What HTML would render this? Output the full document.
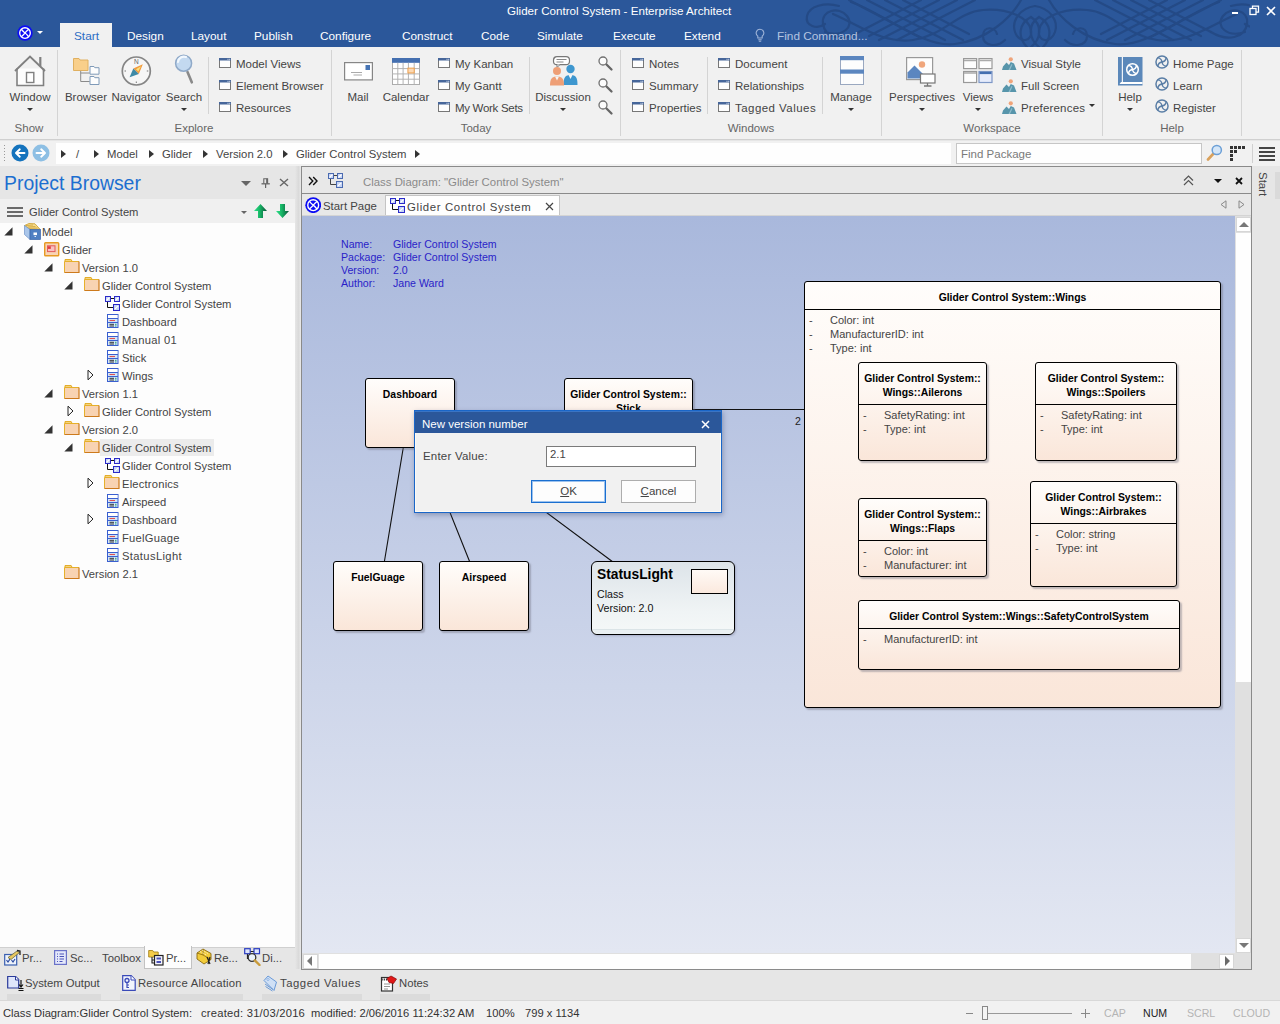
<!DOCTYPE html>
<html>
<head>
<meta charset="utf-8">
<title>Glider Control System - Enterprise Architect</title>
<style>
*{box-sizing:border-box;margin:0;padding:0}
html,body{width:1280px;height:1024px;overflow:hidden;background:#e6e6e6;font-family:"Liberation Sans",sans-serif;font-size:12px;color:#444}
.a{position:absolute}
.t{position:absolute;white-space:nowrap;line-height:14px;height:14px}
#titlebar{left:0;top:0;width:1280px;height:47px;background:#2b579a}
#ribbon{left:0;top:47px;width:1280px;height:93px;background:#f1f1f1;border-bottom:1px solid #d0d0d0}
#crumbbar{left:0;top:141px;width:1280px;height:25px;background:#f1f1f1}
.rtab{position:absolute;top:29px;color:#fff;font-size:11.8px;line-height:15px;white-space:nowrap}
.rl{position:absolute;font-size:11.5px;line-height:14px;white-space:nowrap;color:#444}
.rg{position:absolute;top:121px;font-size:11.5px;line-height:14px;white-space:nowrap;color:#666;transform:translateX(-50%)}
.rc{position:absolute;font-size:11.5px;line-height:14px;white-space:nowrap;color:#444;transform:translateX(-50%)}
.vsep{position:absolute;width:1px;background:#d4d4d4}
.dd{position:absolute;width:0;height:0;border-left:3px solid transparent;border-right:3px solid transparent;border-top:3px solid #333}
.tr{position:absolute;left:0;height:18px;white-space:nowrap;font-size:12.5px;line-height:20px;color:#444}
.box{position:absolute;border:1px solid #000;border-radius:3px;background:linear-gradient(#fffdfb,#fae6d9);box-shadow:2px 2px 1.5px rgba(110,110,125,.42)}
.bt{position:absolute;left:0;right:0;text-align:center;font-weight:bold;font-size:10.4px;line-height:14px;color:#000;white-space:nowrap}
.at{position:absolute;font-size:11px;line-height:14px;color:#444;white-space:nowrap}
.sep{position:absolute;left:0;right:0;height:1px;background:#000}
</style>
</head>
<body>
<!-- TITLE BAR -->
<div id="titlebar" class="a">
<svg class="a" style="left:800px;top:0" width="450" height="47" viewBox="-235 0 450 47" fill="none" stroke="#244a86" stroke-width="2.2" stroke-linecap="round">
<g><path d="M4 47c-10-8-12-22 0-30M8 47c10-10 8-24-4-30"/>
<path d="M0 6c14 2 24 14 20 26s-18 10-16-2 22-22 48-20 40 26 70 30 52-14 80-26"/>
<path d="M14 0c10 18 34 40 66 44s70-30 104-42"/>
<path d="M60 0l78 40M78 0l78 40M96 0l70 36M114 0l62 32"/>
<path d="M150 0l-78 40M168 0l-78 40M186 0l-72 38M132 0l-66 34"/>
<path d="M176 32c16 10 34 6 36-8s-16-18-24-8 4 22 22 16"/>
<path d="M30 40c8 8 22 6 22-4s-12-10-14-2"/>
<path d="M196 6c14-4 30 0 32 10s-10 14-18 8"/></g>
<g transform="scale(-1,1)"><path d="M4 47c-10-8-12-22 0-30M8 47c10-10 8-24-4-30"/>
<path d="M0 6c14 2 24 14 20 26s-18 10-16-2 22-22 48-20 40 26 70 30 52-14 80-26"/>
<path d="M14 0c10 18 34 40 66 44s70-30 104-42"/>
<path d="M60 0l78 40M78 0l78 40M96 0l70 36M114 0l62 32"/>
<path d="M150 0l-78 40M168 0l-78 40M186 0l-72 38M132 0l-66 34"/>
<path d="M176 32c16 10 34 6 36-8s-16-18-24-8 4 22 22 16"/>
<path d="M30 40c8 8 22 6 22-4s-12-10-14-2"/>
<path d="M196 6c14-4 30 0 32 10s-10 14-18 8"/></g>
</svg>
<div class="t" style="left:507px;top:4px;font-size:11.6px;color:#fff">Glider Control System - Enterprise Architect</div>
<!-- app icon -->
<svg class="a" style="left:17px;top:25px" width="16" height="16" viewBox="-8 -8 16 16"><circle r="7.7" fill="#0c0cf4"/><circle r="5.3" fill="none" stroke="#fff" stroke-width="1.350"/><path d="M-3.700 -3.700Q-1 -.5 0 0T3.700 3.700M3.700 -3.700Q.5 -1 0 0T-3.700 3.700" fill="none" stroke="#fff" stroke-width="1.350"/></svg>
<div class="dd" style="left:37px;top:31px;border-top-color:#fff"></div>
<div class="a" style="left:60px;top:23px;width:52px;height:24px;background:#f1f1f1"></div>
<div class="rtab" style="left:74px;color:#2b6cc4">Start</div>
<div class="rtab" style="left:127px">Design</div>
<div class="rtab" style="left:191px">Layout</div>
<div class="rtab" style="left:254px">Publish</div>
<div class="rtab" style="left:320px">Configure</div>
<div class="rtab" style="left:402px">Construct</div>
<div class="rtab" style="left:481px">Code</div>
<div class="rtab" style="left:537px">Simulate</div>
<div class="rtab" style="left:613px">Execute</div>
<div class="rtab" style="left:684px">Extend</div>
<svg class="a" style="left:754px;top:28px" width="12" height="15" viewBox="0 0 12 15" fill="none" stroke="#9fb4d8" stroke-width="1.1"><path d="M6 1.2a3.8 3.8 0 0 0-2.2 6.9V10h4.4V8.100A3.800 3.800 0 0 0 6 1.200zM4.300 11.800h3.400M4.800 13.300h2.400"/></svg>
<div class="rtab" style="left:777px;color:#b4c4e0">Find Command...</div>
<!-- window controls -->
<div class="a" style="left:1232px;top:12px;width:6px;height:2px;background:#fff"></div>
<svg class="a" style="left:1249px;top:5px" width="11" height="11" viewBox="0 0 11 11" fill="none" stroke="#fff" stroke-width="1.3"><rect x="1" y="3.500" width="6" height="6"/><path d="M3.500 3.500V1.200h6v6H7"/></svg>
<svg class="a" style="left:1266px;top:6px" width="10" height="10" viewBox="0 0 10 10" stroke="#fff" stroke-width="1.6"><path d="M1 1l8 8M9 1l-8 8"/></svg>
</div>
<!-- RIBBON -->
<div id="ribbon" class="a"></div>
<div id="ribbonc" class="a" style="left:0;top:0;width:1280px;height:140px">
<div class="vsep" style="left:57px;top:50px;height:86px"></div>
<div class="vsep" style="left:331px;top:50px;height:86px"></div>
<div class="vsep" style="left:620px;top:50px;height:86px"></div>
<div class="vsep" style="left:881px;top:50px;height:86px"></div>
<div class="vsep" style="left:1102px;top:50px;height:86px"></div>
<div class="vsep" style="left:1241px;top:50px;height:86px"></div>
<div class="vsep" style="left:208px;top:57px;height:57px"></div>
<div class="vsep" style="left:529px;top:57px;height:57px"></div>
<div class="vsep" style="left:707px;top:57px;height:57px"></div>
<div class="vsep" style="left:822px;top:57px;height:57px"></div>
<div class="rg" style="left:29px">Show</div>
<div class="rg" style="left:194px">Explore</div>
<div class="rg" style="left:476px">Today</div>
<div class="rg" style="left:751px">Windows</div>
<div class="rg" style="left:992px">Workspace</div>
<div class="rg" style="left:1172px">Help</div>
<div class="rc" style="left:30px;top:90px">Window</div>
<div class="dd" style="left:27px;top:108px"></div>
<div class="rc" style="left:86px;top:90px">Browser</div>
<div class="rc" style="left:136px;top:90px">Navigator</div>
<div class="rc" style="left:184px;top:90px">Search</div>
<div class="dd" style="left:181px;top:108px"></div>
<div class="rc" style="left:358px;top:90px">Mail</div>
<div class="rc" style="left:406px;top:90px">Calendar</div>
<div class="rc" style="left:563px;top:90px">Discussion</div>
<div class="dd" style="left:560px;top:108px"></div>
<div class="rc" style="left:851px;top:90px">Manage</div>
<div class="dd" style="left:848px;top:108px"></div>
<div class="rc" style="left:922px;top:90px">Perspectives</div>
<div class="dd" style="left:919px;top:108px"></div>
<div class="rc" style="left:978px;top:90px">Views</div>
<div class="dd" style="left:975px;top:108px"></div>
<div class="rc" style="left:1130px;top:90px">Help</div>
<div class="dd" style="left:1127px;top:108px"></div>
<svg class="a" style="left:219px;top:58px" width="12" height="10" viewBox="0 0 12 10"><rect x=".5" y=".5" width="11" height="9" fill="#fdfdfd" stroke="#777"/><rect x="0" y="0" width="12" height="2.500" fill="#46669a"/><rect x="8.500" y=".8" width="1" height="1" fill="#dfe6f2"/><rect x="10.200" y=".8" width="1" height="1" fill="#dfe6f2"/></svg>
<div class="rl" style="left:236px;top:57px">Model Views</div>
<svg class="a" style="left:219px;top:80px" width="12" height="10" viewBox="0 0 12 10"><rect x=".5" y=".5" width="11" height="9" fill="#fdfdfd" stroke="#777"/><rect x="0" y="0" width="12" height="2.500" fill="#46669a"/><rect x="8.500" y=".8" width="1" height="1" fill="#dfe6f2"/><rect x="10.200" y=".8" width="1" height="1" fill="#dfe6f2"/></svg>
<div class="rl" style="left:236px;top:79px">Element Browser</div>
<svg class="a" style="left:219px;top:102px" width="12" height="10" viewBox="0 0 12 10"><rect x=".5" y=".5" width="11" height="9" fill="#fdfdfd" stroke="#777"/><rect x="0" y="0" width="12" height="2.500" fill="#46669a"/><rect x="8.500" y=".8" width="1" height="1" fill="#dfe6f2"/><rect x="10.200" y=".8" width="1" height="1" fill="#dfe6f2"/></svg>
<div class="rl" style="left:236px;top:101px">Resources</div>
<svg class="a" style="left:438px;top:58px" width="12" height="10" viewBox="0 0 12 10"><rect x=".5" y=".5" width="11" height="9" fill="#fdfdfd" stroke="#777"/><rect x="0" y="0" width="12" height="2.500" fill="#46669a"/><rect x="8.500" y=".8" width="1" height="1" fill="#dfe6f2"/><rect x="10.200" y=".8" width="1" height="1" fill="#dfe6f2"/></svg>
<div class="rl" style="left:455px;top:57px">My Kanban</div>
<svg class="a" style="left:438px;top:80px" width="12" height="10" viewBox="0 0 12 10"><rect x=".5" y=".5" width="11" height="9" fill="#fdfdfd" stroke="#777"/><rect x="0" y="0" width="12" height="2.500" fill="#46669a"/><rect x="8.500" y=".8" width="1" height="1" fill="#dfe6f2"/><rect x="10.200" y=".8" width="1" height="1" fill="#dfe6f2"/></svg>
<div class="rl" style="left:455px;top:79px">My Gantt</div>
<svg class="a" style="left:438px;top:102px" width="12" height="10" viewBox="0 0 12 10"><rect x=".5" y=".5" width="11" height="9" fill="#fdfdfd" stroke="#777"/><rect x="0" y="0" width="12" height="2.500" fill="#46669a"/><rect x="8.500" y=".8" width="1" height="1" fill="#dfe6f2"/><rect x="10.200" y=".8" width="1" height="1" fill="#dfe6f2"/></svg>
<div class="rl" style="left:455px;top:101px;letter-spacing:-.3px">My Work Sets</div>
<svg class="a" style="left:632px;top:58px" width="12" height="10" viewBox="0 0 12 10"><rect x=".5" y=".5" width="11" height="9" fill="#fdfdfd" stroke="#777"/><rect x="0" y="0" width="12" height="2.500" fill="#46669a"/><rect x="8.500" y=".8" width="1" height="1" fill="#dfe6f2"/><rect x="10.200" y=".8" width="1" height="1" fill="#dfe6f2"/></svg>
<div class="rl" style="left:649px;top:57px">Notes</div>
<svg class="a" style="left:632px;top:80px" width="12" height="10" viewBox="0 0 12 10"><rect x=".5" y=".5" width="11" height="9" fill="#fdfdfd" stroke="#777"/><rect x="0" y="0" width="12" height="2.500" fill="#46669a"/><rect x="8.500" y=".8" width="1" height="1" fill="#dfe6f2"/><rect x="10.200" y=".8" width="1" height="1" fill="#dfe6f2"/></svg>
<div class="rl" style="left:649px;top:79px">Summary</div>
<svg class="a" style="left:632px;top:102px" width="12" height="10" viewBox="0 0 12 10"><rect x=".5" y=".5" width="11" height="9" fill="#fdfdfd" stroke="#777"/><rect x="0" y="0" width="12" height="2.500" fill="#46669a"/><rect x="8.500" y=".8" width="1" height="1" fill="#dfe6f2"/><rect x="10.200" y=".8" width="1" height="1" fill="#dfe6f2"/></svg>
<div class="rl" style="left:649px;top:101px">Properties</div>
<svg class="a" style="left:718px;top:58px" width="12" height="10" viewBox="0 0 12 10"><rect x=".5" y=".5" width="11" height="9" fill="#fdfdfd" stroke="#777"/><rect x="0" y="0" width="12" height="2.500" fill="#46669a"/><rect x="8.500" y=".8" width="1" height="1" fill="#dfe6f2"/><rect x="10.200" y=".8" width="1" height="1" fill="#dfe6f2"/></svg>
<div class="rl" style="left:735px;top:57px">Document</div>
<svg class="a" style="left:718px;top:80px" width="12" height="10" viewBox="0 0 12 10"><rect x=".5" y=".5" width="11" height="9" fill="#fdfdfd" stroke="#777"/><rect x="0" y="0" width="12" height="2.500" fill="#46669a"/><rect x="8.500" y=".8" width="1" height="1" fill="#dfe6f2"/><rect x="10.200" y=".8" width="1" height="1" fill="#dfe6f2"/></svg>
<div class="rl" style="left:735px;top:79px">Relationships</div>
<svg class="a" style="left:718px;top:102px" width="12" height="10" viewBox="0 0 12 10"><rect x=".5" y=".5" width="11" height="9" fill="#fdfdfd" stroke="#777"/><rect x="0" y="0" width="12" height="2.500" fill="#46669a"/><rect x="8.500" y=".8" width="1" height="1" fill="#dfe6f2"/><rect x="10.200" y=".8" width="1" height="1" fill="#dfe6f2"/></svg>
<div class="rl" style="left:735px;top:101px;letter-spacing:.45px">Tagged Values</div>
<svg class="a" style="left:1002px;top:57px" width="15" height="13" viewBox="0 0 15 13"><circle cx="8.800" cy="2.300" r="2.100" fill="#efa47a"/><path d="M0 13l1-3.500 3.500-4 2.500 2.500 1.800-3 3.200 1.500 2.500 6.500z" fill="#5795ab"/><path d="M6.500 13l3-6 1 .5-2.500 5.500z" fill="#8fbccb"/></svg>
<div class="rl" style="left:1021px;top:57px">Visual Style</div>
<svg class="a" style="left:1002px;top:79px" width="15" height="13" viewBox="0 0 15 13"><circle cx="8.800" cy="2.300" r="2.100" fill="#efa47a"/><path d="M0 13l1-3.500 3.500-4 2.500 2.500 1.800-3 3.200 1.500 2.500 6.500z" fill="#5795ab"/><path d="M6.500 13l3-6 1 .5-2.500 5.500z" fill="#8fbccb"/></svg>
<div class="rl" style="left:1021px;top:79px">Full Screen</div>
<svg class="a" style="left:1002px;top:101px" width="15" height="13" viewBox="0 0 15 13"><circle cx="8.800" cy="2.300" r="2.100" fill="#efa47a"/><path d="M0 13l1-3.500 3.500-4 2.500 2.500 1.800-3 3.200 1.500 2.500 6.500z" fill="#5795ab"/><path d="M6.500 13l3-6 1 .5-2.500 5.500z" fill="#8fbccb"/></svg>
<div class="rl" style="left:1021px;top:101px;letter-spacing:.2px">Preferences</div>
<div class="dd" style="left:1089px;top:104px"></div>
<svg class="a" style="left:1155px;top:55px" width="14" height="14" viewBox="-8 -8 16 16"><circle r="6.900" fill="none" stroke="#5a7ea6" stroke-width="1.700"/><g fill="none" stroke="#5a7ea6" stroke-width="1.6" stroke-linecap="round"><path transform="rotate(0)" d="M0 0Q4.28 -0.69 4.69 -4.69"/><path transform="rotate(90)" d="M0 0Q4.28 -0.69 4.69 -4.69"/><path transform="rotate(180)" d="M0 0Q4.28 -0.69 4.69 -4.69"/><path transform="rotate(270)" d="M0 0Q4.28 -0.69 4.69 -4.69"/></g></svg>
<div class="rl" style="left:1173px;top:57px">Home Page</div>
<svg class="a" style="left:1155px;top:77px" width="14" height="14" viewBox="-8 -8 16 16"><circle r="6.900" fill="none" stroke="#5a7ea6" stroke-width="1.700"/><g fill="none" stroke="#5a7ea6" stroke-width="1.6" stroke-linecap="round"><path transform="rotate(0)" d="M0 0Q4.28 -0.69 4.69 -4.69"/><path transform="rotate(90)" d="M0 0Q4.28 -0.69 4.69 -4.69"/><path transform="rotate(180)" d="M0 0Q4.28 -0.69 4.69 -4.69"/><path transform="rotate(270)" d="M0 0Q4.28 -0.69 4.69 -4.69"/></g></svg>
<div class="rl" style="left:1173px;top:79px">Learn</div>
<svg class="a" style="left:1155px;top:99px" width="14" height="14" viewBox="-8 -8 16 16"><circle r="6.900" fill="none" stroke="#5a7ea6" stroke-width="1.700"/><g fill="none" stroke="#5a7ea6" stroke-width="1.6" stroke-linecap="round"><path transform="rotate(0)" d="M0 0Q4.28 -0.69 4.69 -4.69"/><path transform="rotate(90)" d="M0 0Q4.28 -0.69 4.69 -4.69"/><path transform="rotate(180)" d="M0 0Q4.28 -0.69 4.69 -4.69"/><path transform="rotate(270)" d="M0 0Q4.28 -0.69 4.69 -4.69"/></g></svg>
<div class="rl" style="left:1173px;top:101px">Register</div>
<svg class="a" style="left:597px;top:55px" width="17" height="17" viewBox="0 0 17 17" fill="none"><path d="M9 9L14.500 14.500" stroke="#666" stroke-width="2.300" stroke-linecap="round"/><circle cx="6" cy="6" r="4" fill="#fcfcfc" stroke="#707070" stroke-width="1.300"/></svg>
<svg class="a" style="left:597px;top:77px" width="17" height="17" viewBox="0 0 17 17" fill="none"><path d="M9 9L14.500 14.500" stroke="#666" stroke-width="2.300" stroke-linecap="round"/><circle cx="6" cy="6" r="4" fill="#fcfcfc" stroke="#707070" stroke-width="1.300"/></svg>
<svg class="a" style="left:597px;top:99px" width="17" height="17" viewBox="0 0 17 17" fill="none"><path d="M9 9L14.500 14.500" stroke="#666" stroke-width="2.300" stroke-linecap="round"/><circle cx="6" cy="6" r="4" fill="#fcfcfc" stroke="#707070" stroke-width="1.300"/></svg>
<svg class="a" style="left:9px;top:54px" width="40" height="36" viewBox="9 54 40 36" fill="none" stroke="#808080" stroke-width="1.600"><path d="M17 68.500V85.500H43.500V68.500" fill="#fdfdfd"/><path d="M15 71L30 56.500 45 71" stroke-width="1.900" stroke-linejoin="miter"/><path d="M40.300 57v9" stroke-width="2.200"/><rect x="26.500" y="72.500" width="7.300" height="10" fill="#fff" stroke-width="1.400"/></svg>
<svg class="a" style="left:72px;top:57px" width="28" height="30" viewBox="72 57 28 30"><path d="M80.700 70v11.500h9M80.700 73h9" fill="none" stroke="#8a8a8a" stroke-width="1"/><path d="M73.500 58.500h5.500l1 1.500h8v10.500H73.500z" fill="#f9cf8a" stroke="#e0b060" stroke-width="1"/><path d="M90 66.500h4l.8 1.200h4.200v6.500H90z" fill="#fdfdfd" stroke="#7f9ab8" stroke-width="1"/><path d="M90 76.500h4l.8 1.200h4.200v6.800H90z" fill="#fdfdfd" stroke="#7f9ab8" stroke-width="1"/></svg>
<svg class="a" style="left:121px;top:56px" width="31" height="31" viewBox="121 56 31 31"><circle cx="136.300" cy="71" r="14" fill="#f6f6f6" stroke="#858585" stroke-width="1.700"/><path d="M142.800 64.300L133.300 68.500 138.800 74z" fill="#f19a3c"/><path d="M141 66.200L136 69.200 138.300 71.500z" fill="#fbe27a"/><path d="M129.600 77.300L133.300 68.500 138.800 74z" fill="#3f8aa6"/><text x="136.300" y="64" font-size="6.500" font-family="Liberation Sans" text-anchor="middle" fill="#666">N</text><path d="M124.500 71h1.500M146.800 71h1.500M136.300 81.500v1.500" stroke="#777" stroke-width="1"/></svg>
<svg class="a" style="left:173px;top:54px" width="24" height="32" viewBox="173 54 24 32"><path d="M187.500 72L191.800 82.300" stroke="#8a8a8a" stroke-width="2.600" stroke-linecap="round"/><circle cx="183.600" cy="63.200" r="8" fill="#c3d9f0" stroke="#8fa9c8" stroke-width="1.500"/><path d="M178 62a6 6 0 0 1 8-5" fill="none" stroke="#f2f8fe" stroke-width="2.200" stroke-linecap="round"/></svg>
<svg class="a" style="left:344px;top:62px" width="29" height="19" viewBox="0 0 29 19"><rect x=".6" y=".6" width="27.800" height="17.300" fill="#fff" stroke="#868686" stroke-width="1.200"/><rect x="21.500" y="3" width="4.500" height="5" fill="#4674b4"/><path d="M7 10.500h11M9.500 13h8.500" stroke="#aaa" stroke-width="1"/></svg>
<svg class="a" style="left:392px;top:58px" width="28" height="27" viewBox="0 0 29 28"><rect x=".5" y=".5" width="28" height="27" fill="#fff" stroke="#aaa"/><rect x="0" y="0" width="29" height="5" fill="#446fb0"/><path d="M6 5v23M11.500 5v23M17 5v23M23 5v23M0 11h29M0 16.500h29M0 22h29" stroke="#b0b0b0" stroke-width="1"/><rect x="16.500" y="10.500" width="6.500" height="5" fill="#fbd9b4" stroke="#f0a04a"/></svg>
<svg class="a" style="left:549px;top:56px" width="30" height="30" viewBox="0 0 30 30"><rect x="4.500" y=".7" width="16" height="8" rx="3.500" fill="#fff" stroke="#777" stroke-width="1.200"/><path d="M8 8.500v3l3-3" fill="#fff" stroke="#777"/><path d="M7.500 3.500h10M7.500 6h7" stroke="#888"/><circle cx="21.500" cy="13" r="4.200" fill="#3e97cf"/><path d="M14.500 29c0-8 2-10 7-10s7 2 7 10z" fill="#3e97cf"/><circle cx="8" cy="15" r="4" fill="#ee9f76"/><path d="M1 29.500c0-7 2-9 7-9s7 2 7 9z" fill="#ee9f76"/><path d="M6 20.500l2 4 2-4z" fill="#f6f6f6"/><path d="M19.500 19l2 4 2-4z" fill="#f6f6f6"/></svg>
<svg class="a" style="left:840px;top:56px" width="24" height="29" viewBox="0 0 24 29"><rect x=".5" y=".5" width="23" height="28" fill="#fdfdfd" stroke="#9aa8c0" stroke-width="1"/><rect x="0" y="0" width="24" height="4.200" fill="#5b86bf"/><rect x="0" y="13.500" width="24" height="4.200" fill="#5b86bf"/></svg>
<svg class="a" style="left:906px;top:57px" width="32" height="30" viewBox="0 0 32 30"><rect x=".6" y=".6" width="26" height="22" fill="#fdfdfd" stroke="#999" stroke-width="1.200"/><circle cx="16" cy="7.500" r="3.200" fill="#f0a67c"/><path d="M1.500 21.500v-6l7-7 8 8v5z" fill="#5b86c0"/><rect x="14.500" y="17" width="14.500" height="9" fill="#fff" stroke="#777" stroke-width="1.200"/><path d="M21.500 26v2.500M18 29h7.500" stroke="#777" stroke-width="1.300"/></svg>
<svg class="a" style="left:963px;top:58px" width="30" height="26" viewBox="0 0 30 26" fill="#fdfdfd" stroke="#999" stroke-width="1.200"><rect x=".6" y=".6" width="13" height="10"/><rect x="16" y=".6" width="13" height="10"/><rect x=".6" y="13.500" width="13" height="11"/><rect x="16" y="13.500" width="13" height="11" fill="#e6ecfb" stroke="#7d97c6"/><path d="M1 2.500h12M16.500 2.500h12M1 15h12" stroke="#aaa" stroke-width="1.600"/><path d="M16.500 15h12" stroke="#446fb0" stroke-width="2.200"/></svg>
<svg class="a" style="left:1118px;top:57px" width="25" height="29" viewBox="0 0 25 29"><rect x="0" y="0" width="24.500" height="28.500" fill="#5b88ba"/><rect x="3.800" y="0" width="1.100" height="25" fill="#fff"/><path d="M1.500 27l1.500-2h21.500v2z" fill="#fff"/><g transform="translate(14.500 12.500)"><circle r="5.800" fill="none" stroke="#fff" stroke-width="1.500"/><g fill="none" stroke="#fff" stroke-width="1.4" stroke-linecap="round"><path transform="rotate(0)" d="M0 0Q3.60 -0.58 3.94 -3.94"/><path transform="rotate(90)" d="M0 0Q3.60 -0.58 3.94 -3.94"/><path transform="rotate(180)" d="M0 0Q3.60 -0.58 3.94 -3.94"/><path transform="rotate(270)" d="M0 0Q3.60 -0.58 3.94 -3.94"/></g></g></svg>
</div>
<!-- BREADCRUMB BAR -->
<div id="crumbbar" class="a"></div>
<div id="crumbc" class="a" style="left:0;top:0;width:1280px;height:0">
<div class="a" style="left:4px;top:145px;width:1px;height:17px;background:repeating-linear-gradient(#999 0 1px,transparent 1px 3px)"></div>
<svg class="a" style="left:11px;top:144px" width="18" height="18" viewBox="0 0 18 18"><circle cx="9" cy="9" r="8.500" fill="#1473bd"/><path d="M13.500 9H5.500M8.800 5.300L5 9l3.800 3.700" fill="none" stroke="#fff" stroke-width="1.900" stroke-linecap="round" stroke-linejoin="round"/></svg>
<svg class="a" style="left:32px;top:144px" width="18" height="18" viewBox="0 0 18 18"><circle cx="9" cy="9" r="8.500" fill="#8dbfe4"/><path d="M4.500 9h8M9.200 5.300L13 9l-3.800 3.700" fill="none" stroke="#fff" stroke-width="1.900" stroke-linecap="round" stroke-linejoin="round"/></svg>
<div class="a" style="left:56px;top:143px;width:895px;height:21px;background:#fefefe"></div>
<div class="a" style="left:61px;top:150px;width:0;height:0;border-top:4px solid transparent;border-bottom:4px solid transparent;border-left:5px solid #333"></div>
<div class="a" style="left:94px;top:150px;width:0;height:0;border-top:4px solid transparent;border-bottom:4px solid transparent;border-left:5px solid #333"></div>
<div class="a" style="left:149px;top:150px;width:0;height:0;border-top:4px solid transparent;border-bottom:4px solid transparent;border-left:5px solid #333"></div>
<div class="a" style="left:203px;top:150px;width:0;height:0;border-top:4px solid transparent;border-bottom:4px solid transparent;border-left:5px solid #333"></div>
<div class="a" style="left:283px;top:150px;width:0;height:0;border-top:4px solid transparent;border-bottom:4px solid transparent;border-left:5px solid #333"></div>
<div class="a" style="left:415px;top:150px;width:0;height:0;border-top:4px solid transparent;border-bottom:4px solid transparent;border-left:5px solid #333"></div>
<div class="t" style="left:76px;top:147px;font-size:11.3px">/</div>
<div class="t" style="left:107px;top:147px;font-size:11.3px">Model</div>
<div class="t" style="left:162px;top:147px;font-size:11.3px">Glider</div>
<div class="t" style="left:216px;top:147px;font-size:11.3px">Version 2.0</div>
<div class="t" style="left:296px;top:147px;font-size:11.3px">Glider Control System</div>
<div class="a" style="left:956px;top:143px;width:246px;height:21px;background:#fefefe;border:1px solid #c6c6c6"></div>
<div class="t" style="left:961px;top:147px;font-size:11.5px;color:#7a7a7a">Find Package</div>
<svg class="a" style="left:1206px;top:144px" width="17" height="17" viewBox="0 0 17 17"><path d="M2 15.500L8 9" stroke="#d9a15c" stroke-width="2.600" stroke-linecap="round"/><circle cx="10.800" cy="6" r="4.600" fill="#d4e6f8" stroke="#6b9fd6" stroke-width="1.500"/></svg>
<svg class="a" style="left:1230px;top:146px" width="16" height="16" viewBox="0 0 16 16" fill="#333"><rect x="0" y="0" width="3" height="3"/><rect x="4" y="0" width="3" height="3"/><rect x="8" y="0" width="3" height="3"/><rect x="12" y="0" width="3" height="3"/><rect x="0" y="4" width="3" height="3"/><rect x="4" y="4" width="3" height="3"/><rect x="0" y="8" width="3" height="3"/><rect x="0" y="12" width="3" height="3"/></svg>
<div class="vsep" style="left:1252px;top:144px;height:19px;background:#d0d0d0"></div>
<div class="a" style="left:1259px;top:147px;width:16px;height:14px;background:repeating-linear-gradient(#444 0 2px,transparent 2px 4px)"></div>
</div>
<!-- LEFT PANEL -->
<div id="left" class="a" style="left:0;top:166px;width:295px;height:802px;background:#fdfdfd"></div>
<div class="a" style="left:295px;top:166px;width:5px;height:803px;background:linear-gradient(90deg,#e6e6e6,#dadada 70%,#e2e2e2)"></div>
<div id="leftc" class="a" style="left:0;top:0;width:295px;height:0">
<div class="a" style="left:0;top:166px;width:295px;height:33px;background:#e6e6e6"></div>
<div class="a" style="left:4px;top:170px;font-size:19.4px;line-height:26px;color:#1c6ed0;white-space:nowrap">Project Browser</div>
<div class="a" style="left:241px;top:181px;width:0;height:0;border-left:5px solid transparent;border-right:5px solid transparent;border-top:5px solid #666"></div>
<svg class="a" style="left:261px;top:177px" width="10" height="12" viewBox="0 0 10 12" fill="none" stroke="#666" stroke-width="1.100"><path d="M2.800 6.500V1.700h3.800V6.500"/><path d="M6 1.700V6.500" stroke-width="1.700"/><path d="M.500 6.800h8.300" stroke-width="1.300"/><path d="M4.600 7v4" stroke-width="1.200"/></svg>
<svg class="a" style="left:279px;top:178px" width="10" height="9" viewBox="0 0 10 9" stroke="#666" stroke-width="1.400"><path d="M1 1l8 7M9 1l-8 7"/></svg>
<div class="a" style="left:0;top:199px;width:295px;height:24px;background:#f0f0f0"></div>
<div class="a" style="left:7px;top:207px;width:16px;height:10px;background:repeating-linear-gradient(#6a6a6a 0 2px,transparent 2px 4px)"></div>
<div class="t" style="left:29px;top:205px;font-size:11.2px">Glider Control System</div>
<div class="dd" style="left:241px;top:211px;border-top-color:#666"></div>
<svg class="a" style="left:254px;top:204px" width="13" height="14" viewBox="0 0 13 14"><defs><linearGradient id="gg" x1="0" x2="1"><stop offset="0" stop-color="#2fe08a"/><stop offset=".45" stop-color="#17b565"/><stop offset="1" stop-color="#0a5238"/></linearGradient></defs><path d="M6.500 0L13 7H9v7H4V7H0z" fill="url(#gg)"/></svg>
<svg class="a" style="left:276px;top:204px" width="13" height="14" viewBox="0 0 13 14"><path d="M6.500 14L13 7H9V0H4v7H0z" fill="url(#gg)"/></svg>
<div class="a" style="left:100px;top:439px;width:114px;height:17px;background:#ececec"></div>
<svg class="a" style="left:4px;top:227px" width="9" height="9" viewBox="0 0 9 9"><path d="M8.500 .300V8.500H.300z" fill="#333"/></svg>
<svg class="a" style="left:24px;top:223px" width="17" height="17" viewBox="0 0 17 17"><path d="M.500 2.500L5 .500l6 .3 5 5.500H6z" fill="#f7dc8c" stroke="#c89a2a" stroke-width=".8"/><path d="M2 2.500l7-.5M3.500 4l8-.5M5 5.200l8.500-.2" stroke="#c89a2a" stroke-width=".7"/><path d="M.500 2.500L6 6.500V16.500L.500 11.500z" fill="#aac6ea" stroke="#6f94c8" stroke-width=".7"/><rect x="6" y="6.500" width="10.500" height="10" fill="#4f7fc2" stroke="#3a66a8" stroke-width=".7"/><rect x="9.500" y="9.500" width="3.500" height="2.600" fill="#fff"/><path d="M10.500 13.500h1.500" stroke="#dfe8f6" stroke-width="1"/></svg>
<div class="tr" style="left:42px;top:222px;font-size:11.2px">Model</div>
<svg class="a" style="left:24px;top:245px" width="9" height="9" viewBox="0 0 9 9"><path d="M8.500 .300V8.500H.300z" fill="#333"/></svg>
<svg class="a" style="left:44px;top:242px" width="16" height="15" viewBox="0 0 16 15"><rect x=".7" y=".7" width="14" height="13" rx=".8" fill="#f8d3b4" stroke="#e79a22" stroke-width="1.400"/><rect x="3.500" y="3.800" width="7.500" height="5.800" fill="#f9c0c0" stroke="#e25a5a" stroke-width="1"/><rect x="4" y="4.300" width="2.800" height="2.600" fill="#e23c3c"/></svg>
<div class="tr" style="left:62px;top:240px;font-size:11.2px">Glider</div>
<svg class="a" style="left:44px;top:263px" width="9" height="9" viewBox="0 0 9 9"><path d="M8.500 .300V8.500H.300z" fill="#333"/></svg>
<svg class="a" style="left:64px;top:259px" width="16" height="15" viewBox="0 0 16 15"><path d="M1 .600h6.200l1 2H1z" fill="#f6d98a" stroke="#e2a81c" stroke-width="1"/><rect x=".5" y="2.500" width="14.500" height="11" fill="#f8d3b2"/><path d="M.500 13.500V2.500H15" fill="none" stroke="#e6b02a" stroke-width="1"/><path d="M15 2.500V13.500H.500" fill="none" stroke="#cd7a1c" stroke-width="1.200"/></svg>
<div class="tr" style="left:82px;top:258px;font-size:11.2px">Version 1.0</div>
<svg class="a" style="left:64px;top:281px" width="9" height="9" viewBox="0 0 9 9"><path d="M8.500 .300V8.500H.300z" fill="#333"/></svg>
<svg class="a" style="left:84px;top:277px" width="16" height="15" viewBox="0 0 16 15"><path d="M1 .600h6.200l1 2H1z" fill="#f6d98a" stroke="#e2a81c" stroke-width="1"/><rect x=".5" y="2.500" width="14.500" height="11" fill="#f8d3b2"/><path d="M.500 13.500V2.500H15" fill="none" stroke="#e6b02a" stroke-width="1"/><path d="M15 2.500V13.500H.500" fill="none" stroke="#cd7a1c" stroke-width="1.200"/></svg>
<div class="tr" style="left:102px;top:276px;font-size:11.2px">Glider Control System</div>
<svg class="a" style="left:105px;top:296px" width="16" height="16" viewBox="0 0 16 16"><path d="M5.500 2.500h4M2.500 5.500v6h6" fill="none" stroke="#111" stroke-width="1"/><rect x=".5" y=".5" width="5" height="5" fill="#c6d4f4" stroke="#2a2ac8" stroke-width="1"/><path d="M1.500 4.500l3-3" stroke="#fff" stroke-width="1.200"/><rect x="9.500" y=".5" width="5" height="5" fill="#c6d4f4" stroke="#2a2ac8" stroke-width="1"/><path d="M10.500 4.500l3-3" stroke="#fff" stroke-width="1.200"/><rect x="8.500" y="8.500" width="6" height="6" fill="#c6d4f4" stroke="#2a2ac8" stroke-width="1"/><path d="M9.800 13.200l3.400-3.400" stroke="#fff" stroke-width="1.200"/></svg>
<div class="tr" style="left:122px;top:294px;font-size:11.2px">Glider Control System</div>
<svg class="a" style="left:107px;top:314px" width="12" height="14" viewBox="0 0 12 14"><rect x=".5" y=".5" width="10.500" height="13" fill="#d3e6f8" stroke="#3a5fd0"/><rect x="1" y="1" width="9.500" height="3" fill="#fff"/><path d="M.500 4.500h10.500M.500 8.500h10.500" stroke="#3a5fd0"/><path d="M2.500 6.500h5.500" stroke="#e05050" stroke-width="1.100"/><path d="M2.500 10.300h4.500M2.500 12h4.500" stroke="#333" stroke-width="1"/><path d="M8 10.300h1.500M8 12h1.500" stroke="#2a9a7a" stroke-width="1"/></svg>
<div class="tr" style="left:122px;top:312px;font-size:11.2px">Dashboard</div>
<svg class="a" style="left:107px;top:332px" width="12" height="14" viewBox="0 0 12 14"><rect x=".5" y=".5" width="10.500" height="13" fill="#d3e6f8" stroke="#3a5fd0"/><rect x="1" y="1" width="9.500" height="3" fill="#fff"/><path d="M.500 4.500h10.500M.500 8.500h10.500" stroke="#3a5fd0"/><path d="M2.500 6.500h5.500" stroke="#e05050" stroke-width="1.100"/><path d="M2.500 10.300h4.500M2.500 12h4.500" stroke="#333" stroke-width="1"/><path d="M8 10.300h1.500M8 12h1.500" stroke="#2a9a7a" stroke-width="1"/></svg>
<div class="tr" style="left:122px;top:330px;font-size:11.2px;letter-spacing:0.3px">Manual 01</div>
<svg class="a" style="left:107px;top:350px" width="12" height="14" viewBox="0 0 12 14"><rect x=".5" y=".5" width="10.500" height="13" fill="#d3e6f8" stroke="#3a5fd0"/><rect x="1" y="1" width="9.500" height="3" fill="#fff"/><path d="M.500 4.500h10.500M.500 8.500h10.500" stroke="#3a5fd0"/><path d="M2.500 6.500h5.500" stroke="#e05050" stroke-width="1.100"/><path d="M2.500 10.300h4.500M2.500 12h4.500" stroke="#333" stroke-width="1"/><path d="M8 10.300h1.500M8 12h1.500" stroke="#2a9a7a" stroke-width="1"/></svg>
<div class="tr" style="left:122px;top:348px;font-size:11.2px">Stick</div>
<svg class="a" style="left:87px;top:369px" width="8" height="12" viewBox="0 0 8 12"><path d="M1 1.200L6 6 1 10.800z" fill="#fff" stroke="#222" stroke-width="1"/></svg>
<svg class="a" style="left:107px;top:368px" width="12" height="14" viewBox="0 0 12 14"><rect x=".5" y=".5" width="10.500" height="13" fill="#d3e6f8" stroke="#3a5fd0"/><rect x="1" y="1" width="9.500" height="3" fill="#fff"/><path d="M.500 4.500h10.500M.500 8.500h10.500" stroke="#3a5fd0"/><path d="M2.500 6.500h5.500" stroke="#e05050" stroke-width="1.100"/><path d="M2.500 10.300h4.500M2.500 12h4.500" stroke="#333" stroke-width="1"/><path d="M8 10.300h1.500M8 12h1.500" stroke="#2a9a7a" stroke-width="1"/></svg>
<div class="tr" style="left:122px;top:366px;font-size:11.2px">Wings</div>
<svg class="a" style="left:44px;top:389px" width="9" height="9" viewBox="0 0 9 9"><path d="M8.500 .300V8.500H.300z" fill="#333"/></svg>
<svg class="a" style="left:64px;top:385px" width="16" height="15" viewBox="0 0 16 15"><path d="M1 .600h6.200l1 2H1z" fill="#f6d98a" stroke="#e2a81c" stroke-width="1"/><rect x=".5" y="2.500" width="14.500" height="11" fill="#f8d3b2"/><path d="M.500 13.500V2.500H15" fill="none" stroke="#e6b02a" stroke-width="1"/><path d="M15 2.500V13.500H.500" fill="none" stroke="#cd7a1c" stroke-width="1.200"/></svg>
<div class="tr" style="left:82px;top:384px;font-size:11.2px">Version 1.1</div>
<svg class="a" style="left:67px;top:405px" width="8" height="12" viewBox="0 0 8 12"><path d="M1 1.200L6 6 1 10.800z" fill="#fff" stroke="#222" stroke-width="1"/></svg>
<svg class="a" style="left:84px;top:403px" width="16" height="15" viewBox="0 0 16 15"><path d="M1 .600h6.200l1 2H1z" fill="#f6d98a" stroke="#e2a81c" stroke-width="1"/><rect x=".5" y="2.500" width="14.500" height="11" fill="#f8d3b2"/><path d="M.500 13.500V2.500H15" fill="none" stroke="#e6b02a" stroke-width="1"/><path d="M15 2.500V13.500H.500" fill="none" stroke="#cd7a1c" stroke-width="1.200"/></svg>
<div class="tr" style="left:102px;top:402px;font-size:11.2px">Glider Control System</div>
<svg class="a" style="left:44px;top:425px" width="9" height="9" viewBox="0 0 9 9"><path d="M8.500 .300V8.500H.300z" fill="#333"/></svg>
<svg class="a" style="left:64px;top:421px" width="16" height="15" viewBox="0 0 16 15"><path d="M1 .600h6.200l1 2H1z" fill="#f6d98a" stroke="#e2a81c" stroke-width="1"/><rect x=".5" y="2.500" width="14.500" height="11" fill="#f8d3b2"/><path d="M.500 13.500V2.500H15" fill="none" stroke="#e6b02a" stroke-width="1"/><path d="M15 2.500V13.500H.500" fill="none" stroke="#cd7a1c" stroke-width="1.200"/></svg>
<div class="tr" style="left:82px;top:420px;font-size:11.2px">Version 2.0</div>
<svg class="a" style="left:64px;top:443px" width="9" height="9" viewBox="0 0 9 9"><path d="M8.500 .300V8.500H.300z" fill="#333"/></svg>
<svg class="a" style="left:84px;top:439px" width="16" height="15" viewBox="0 0 16 15"><path d="M1 .600h6.200l1 2H1z" fill="#f6d98a" stroke="#e2a81c" stroke-width="1"/><rect x=".5" y="2.500" width="14.500" height="11" fill="#f8d3b2"/><path d="M.500 13.500V2.500H15" fill="none" stroke="#e6b02a" stroke-width="1"/><path d="M15 2.500V13.500H.500" fill="none" stroke="#cd7a1c" stroke-width="1.200"/></svg>
<div class="tr" style="left:102px;top:438px;font-size:11.2px">Glider Control System</div>
<svg class="a" style="left:105px;top:458px" width="16" height="16" viewBox="0 0 16 16"><path d="M5.500 2.500h4M2.500 5.500v6h6" fill="none" stroke="#111" stroke-width="1"/><rect x=".5" y=".5" width="5" height="5" fill="#c6d4f4" stroke="#2a2ac8" stroke-width="1"/><path d="M1.500 4.500l3-3" stroke="#fff" stroke-width="1.200"/><rect x="9.500" y=".5" width="5" height="5" fill="#c6d4f4" stroke="#2a2ac8" stroke-width="1"/><path d="M10.500 4.500l3-3" stroke="#fff" stroke-width="1.200"/><rect x="8.500" y="8.500" width="6" height="6" fill="#c6d4f4" stroke="#2a2ac8" stroke-width="1"/><path d="M9.800 13.200l3.400-3.400" stroke="#fff" stroke-width="1.200"/></svg>
<div class="tr" style="left:122px;top:456px;font-size:11.2px">Glider Control System</div>
<svg class="a" style="left:87px;top:477px" width="8" height="12" viewBox="0 0 8 12"><path d="M1 1.200L6 6 1 10.800z" fill="#fff" stroke="#222" stroke-width="1"/></svg>
<svg class="a" style="left:104px;top:475px" width="16" height="15" viewBox="0 0 16 15"><path d="M1 .600h6.200l1 2H1z" fill="#f6d98a" stroke="#e2a81c" stroke-width="1"/><rect x=".5" y="2.500" width="14.500" height="11" fill="#f8d3b2"/><path d="M.500 13.500V2.500H15" fill="none" stroke="#e6b02a" stroke-width="1"/><path d="M15 2.500V13.500H.500" fill="none" stroke="#cd7a1c" stroke-width="1.200"/></svg>
<div class="tr" style="left:122px;top:474px;font-size:11.2px;letter-spacing:0.2px">Electronics</div>
<svg class="a" style="left:107px;top:494px" width="12" height="14" viewBox="0 0 12 14"><rect x=".5" y=".5" width="10.500" height="13" fill="#d3e6f8" stroke="#3a5fd0"/><rect x="1" y="1" width="9.500" height="3" fill="#fff"/><path d="M.500 4.500h10.500M.500 8.500h10.500" stroke="#3a5fd0"/><path d="M2.500 6.500h5.500" stroke="#e05050" stroke-width="1.100"/><path d="M2.500 10.300h4.500M2.500 12h4.500" stroke="#333" stroke-width="1"/><path d="M8 10.300h1.500M8 12h1.500" stroke="#2a9a7a" stroke-width="1"/></svg>
<div class="tr" style="left:122px;top:492px;font-size:11.2px">Airspeed</div>
<svg class="a" style="left:87px;top:513px" width="8" height="12" viewBox="0 0 8 12"><path d="M1 1.200L6 6 1 10.800z" fill="#fff" stroke="#222" stroke-width="1"/></svg>
<svg class="a" style="left:107px;top:512px" width="12" height="14" viewBox="0 0 12 14"><rect x=".5" y=".5" width="10.500" height="13" fill="#d3e6f8" stroke="#3a5fd0"/><rect x="1" y="1" width="9.500" height="3" fill="#fff"/><path d="M.500 4.500h10.500M.500 8.500h10.500" stroke="#3a5fd0"/><path d="M2.500 6.500h5.500" stroke="#e05050" stroke-width="1.100"/><path d="M2.500 10.300h4.500M2.500 12h4.500" stroke="#333" stroke-width="1"/><path d="M8 10.300h1.500M8 12h1.500" stroke="#2a9a7a" stroke-width="1"/></svg>
<div class="tr" style="left:122px;top:510px;font-size:11.2px">Dashboard</div>
<svg class="a" style="left:107px;top:530px" width="12" height="14" viewBox="0 0 12 14"><rect x=".5" y=".5" width="10.500" height="13" fill="#d3e6f8" stroke="#3a5fd0"/><rect x="1" y="1" width="9.500" height="3" fill="#fff"/><path d="M.500 4.500h10.500M.500 8.500h10.500" stroke="#3a5fd0"/><path d="M2.500 6.500h5.500" stroke="#e05050" stroke-width="1.100"/><path d="M2.500 10.300h4.500M2.500 12h4.500" stroke="#333" stroke-width="1"/><path d="M8 10.300h1.500M8 12h1.500" stroke="#2a9a7a" stroke-width="1"/></svg>
<div class="tr" style="left:122px;top:528px;font-size:11.2px;letter-spacing:0.25px">FuelGuage</div>
<svg class="a" style="left:107px;top:548px" width="12" height="14" viewBox="0 0 12 14"><rect x=".5" y=".5" width="10.500" height="13" fill="#d3e6f8" stroke="#3a5fd0"/><rect x="1" y="1" width="9.500" height="3" fill="#fff"/><path d="M.500 4.500h10.500M.500 8.500h10.500" stroke="#3a5fd0"/><path d="M2.500 6.500h5.500" stroke="#e05050" stroke-width="1.100"/><path d="M2.500 10.300h4.500M2.500 12h4.500" stroke="#333" stroke-width="1"/><path d="M8 10.300h1.500M8 12h1.500" stroke="#2a9a7a" stroke-width="1"/></svg>
<div class="tr" style="left:122px;top:546px;font-size:11.2px;letter-spacing:0.36px">StatusLight</div>
<svg class="a" style="left:64px;top:565px" width="16" height="15" viewBox="0 0 16 15"><path d="M1 .600h6.200l1 2H1z" fill="#f6d98a" stroke="#e2a81c" stroke-width="1"/><rect x=".5" y="2.500" width="14.500" height="11" fill="#f8d3b2"/><path d="M.500 13.500V2.500H15" fill="none" stroke="#e6b02a" stroke-width="1"/><path d="M15 2.500V13.500H.500" fill="none" stroke="#cd7a1c" stroke-width="1.200"/></svg>
<div class="tr" style="left:82px;top:564px;font-size:11.2px">Version 2.1</div>
</div>
<!-- DIAGRAM -->
<div id="diagwrap" class="a" style="left:301px;top:166px;width:951px;height:804px;border:1px solid #8a8a8a;background:#e8e8e8"></div>
<div class="a" style="left:302px;top:193px;width:949px;height:1px;background:#8a8a8a"></div>
<svg class="a" style="left:308px;top:176px" width="10" height="10" viewBox="0 0 10 10" fill="none" stroke="#111" stroke-width="1.400"><path d="M1 1l3.800 4L1 9M5.200 1L9 5 5.200 9"/></svg>
<svg class="a" style="left:328px;top:173px" width="16" height="16" viewBox="0 0 16 16"><path d="M5.500 2.500h4M2.500 5.500v6h6" fill="none" stroke="#444" stroke-width="1"/><rect x=".5" y=".5" width="5" height="5" fill="#c6d4f4" stroke="#4a6ab0" stroke-width="1"/><path d="M1.500 4.500l3-3" stroke="#fff" stroke-width="1.200"/><rect x="9.500" y=".5" width="5" height="5" fill="#c6d4f4" stroke="#4a6ab0" stroke-width="1"/><path d="M10.500 4.500l3-3" stroke="#fff" stroke-width="1.200"/><rect x="8.500" y="8.500" width="6" height="6" fill="#c6d4f4" stroke="#4a6ab0" stroke-width="1"/><path d="M9.800 13.200l3.400-3.400" stroke="#fff" stroke-width="1.200"/></svg>
<div class="t" style="left:363px;top:175px;font-size:11.4px;color:#8a8a8a">Class Diagram: "Glider Control System"</div>
<svg class="a" style="left:1183px;top:175px" width="11" height="11" viewBox="0 0 11 11" fill="none" stroke="#555" stroke-width="1.200"><path d="M1 5.500L5.500 1 10 5.500M1 10L5.500 5.500 10 10"/></svg>
<div class="a" style="left:1214px;top:179px;width:0;height:0;border-left:4px solid transparent;border-right:4px solid transparent;border-top:4px solid #111"></div>
<svg class="a" style="left:1235px;top:177px" width="8" height="8" viewBox="0 0 8 8" stroke="#111" stroke-width="1.800"><path d="M1 1l6 6M7 1L1 7"/></svg>
<svg class="a" style="left:304.800px;top:196.600px" width="16.400" height="16.400" viewBox="-8 -8 16 16"><circle r="7.7" fill="#0c0cf4"/><circle r="5.3" fill="none" stroke="#fff" stroke-width="1.350"/><path d="M-3.700 -3.700Q-1 -.5 0 0T3.700 3.700M3.700 -3.700Q.5 -1 0 0T-3.700 3.700" fill="none" stroke="#fff" stroke-width="1.350"/></svg>
<div class="t" style="left:323px;top:199px;font-size:11.4px">Start Page</div>
<div class="a" style="left:385px;top:195px;width:175px;height:21px;background:#fefefe;border:1px solid #c4c4c4;border-bottom:none"></div>
<svg class="a" style="left:390px;top:198px" width="16" height="16" viewBox="0 0 16 16"><path d="M5.500 2.500h4M2.500 5.500v6h6" fill="none" stroke="#111" stroke-width="1"/><rect x=".5" y=".5" width="5" height="5" fill="#c6d4f4" stroke="#2a2ac8" stroke-width="1"/><path d="M1.500 4.500l3-3" stroke="#fff" stroke-width="1.200"/><rect x="9.500" y=".5" width="5" height="5" fill="#c6d4f4" stroke="#2a2ac8" stroke-width="1"/><path d="M10.500 4.500l3-3" stroke="#fff" stroke-width="1.200"/><rect x="8.500" y="8.500" width="6" height="6" fill="#c6d4f4" stroke="#2a2ac8" stroke-width="1"/><path d="M9.800 13.200l3.400-3.400" stroke="#fff" stroke-width="1.200"/></svg>
<div class="t" style="left:407px;top:200px;font-size:11.4px;letter-spacing:.62px">Glider Control System</div>
<svg class="a" style="left:545px;top:202px" width="9" height="9" viewBox="0 0 9 9" stroke="#444" stroke-width="1.200"><path d="M1 1l7 7M8 1L1 8"/></svg>
<svg class="a" style="left:1220px;top:200px" width="7" height="9" viewBox="0 0 7 9" fill="none" stroke="#888" stroke-width="1"><path d="M6 .8L1 4.500 6 8.200z"/></svg>
<svg class="a" style="left:1238px;top:200px" width="7" height="9" viewBox="0 0 7 9" fill="none" stroke="#888" stroke-width="1"><path d="M1 .8L6 4.500 1 8.200z"/></svg>
<div class="a" style="left:1235px;top:216px;width:16px;height:737px;background:#e0e0e0"></div>
<div class="a" style="left:1236px;top:217px;width:15px;height:15px;background:#fefefe;border:1px solid #d6d6d6"></div>
<div class="a" style="left:1239px;top:222px;width:0;height:0;border-left:5px solid transparent;border-right:5px solid transparent;border-bottom:5px solid #777"></div>
<div class="a" style="left:1236px;top:233px;width:15px;height:449px;background:#fefefe"></div>
<div class="a" style="left:1236px;top:938px;width:15px;height:15px;background:#fefefe;border:1px solid #d6d6d6"></div>
<div class="a" style="left:1239px;top:943px;width:0;height:0;border-left:5px solid transparent;border-right:5px solid transparent;border-top:5px solid #777"></div>
<div class="a" style="left:302px;top:953px;width:949px;height:16px;background:#e0e0e0"></div>
<div class="a" style="left:303px;top:954px;width:15px;height:15px;background:#fefefe;border:1px solid #d6d6d6"></div>
<div class="a" style="left:307px;top:956px;width:0;height:0;border-top:5px solid transparent;border-bottom:5px solid transparent;border-right:5px solid #777"></div>
<div class="a" style="left:319px;top:954px;width:872px;height:15px;background:#fefefe"></div>
<div class="a" style="left:1219px;top:954px;width:15px;height:15px;background:#fefefe;border:1px solid #d6d6d6"></div>
<div class="a" style="left:1225px;top:956px;width:0;height:0;border-top:5px solid transparent;border-bottom:5px solid transparent;border-left:5px solid #6a6a6a"></div>
<div class="a" style="left:1275px;top:172px;width:5px;height:27px;background:#dadada"></div>
<div class="a" style="left:1256px;top:172px;width:14px;height:28px"><div style="position:absolute;left:14px;top:0;transform-origin:0 0;transform:rotate(90deg);font-size:11.5px;line-height:14px;white-space:nowrap;color:#444">Start</div></div>
<div class="a" style="left:302px;top:215px;width:949px;height:1px;background:#d4d4d4"></div>
<div id="canvas" class="a" style="left:302px;top:216px;width:933px;height:737px;background:linear-gradient(#a9b8dc,#e3e7f2);overflow:hidden">
<div class="a" style="left:-302px;top:-216px;width:1280px;height:1024px">
<div class="t" style="left:341px;top:237px;font-size:10.6px;color:#2a1ec8">Name:</div><div class="t" style="left:393px;top:237px;font-size:10.6px;color:#2a1ec8">Glider Control System</div>
<div class="t" style="left:341px;top:250px;font-size:10.6px;color:#2a1ec8">Package:</div><div class="t" style="left:393px;top:250px;font-size:10.6px;color:#2a1ec8">Glider Control System</div>
<div class="t" style="left:341px;top:263px;font-size:10.6px;color:#2a1ec8">Version:</div><div class="t" style="left:393px;top:263px;font-size:10.6px;color:#2a1ec8">2.0</div>
<div class="t" style="left:341px;top:276px;font-size:10.6px;color:#2a1ec8">Author:</div><div class="t" style="left:393px;top:276px;font-size:10.6px;color:#2a1ec8">Jane Ward</div>
<svg class="a" style="left:303px;top:216px" width="932" height="737" viewBox="303 216 932 737" fill="none" stroke="#111" stroke-width="1.100"><path d="M403.300 447.500L384.400 561.500M424 447.500L469.600 561.500M455 444.400L612.300 561.500M692 409.500H805"/></svg>
<div class="t" style="left:795px;top:414px;font-size:10.6px;color:#222">2</div>
<div class="box" style="left:365px;top:378px;width:90px;height:70px"><div class="bt" style="top:9px">Dashboard</div></div>
<div class="box" style="left:564px;top:378px;width:129px;height:64px"><div class="bt" style="top:9px">Glider Control System::</div><div class="bt" style="top:23px">Stick</div></div>
<div class="box" style="left:333px;top:561px;width:90px;height:70px"><div class="bt" style="top:9px">FuelGuage</div></div>
<div class="box" style="left:439px;top:561px;width:90px;height:70px"><div class="bt" style="top:9px">Airspeed</div></div>
<div class="box" style="left:591px;top:561px;width:144px;height:74px;border-radius:6px;background:linear-gradient(#dde4e9,#f0f4f5 70%,#f5f8f8);box-shadow:1px 1px 2px rgba(90,90,120,.3)"><div class="a" style="left:1px;right:1px;bottom:0;height:5px;background:#eaf0f2;border-top:1px solid #dbe4e7;border-radius:0 0 5px 5px"></div><div class="a" style="left:5px;top:4px;font-size:13.8px;line-height:18px;font-weight:bold;color:#000;white-space:nowrap">StatusLight</div><div class="at" style="left:5px;top:25px;color:#111;font-size:10.6px">Class</div><div class="at" style="left:5px;top:39px;color:#111;font-size:10.7px">Version: 2.0</div><div class="a" style="left:99px;top:7px;width:37px;height:25px;border:1px solid #000;background:linear-gradient(#fffaf6,#fbe9de)"></div></div>
<div class="box" style="left:804px;top:281px;width:417px;height:427px"><div class="bt" style="top:9px">Glider Control System::Wings</div><div class="sep" style="top:27px"></div><div class="at" style="left:4px;top:31px">-</div><div class="at" style="left:25px;top:31px">Color: int</div><div class="at" style="left:4px;top:45px">-</div><div class="at" style="left:25px;top:45px">ManufacturerID: int</div><div class="at" style="left:4px;top:59px">-</div><div class="at" style="left:25px;top:59px">Type: int</div></div>
<div class="box" style="left:858px;top:362px;width:129px;height:99px"><div class="bt" style="top:9px">Glider Control System::</div><div class="bt" style="top:23px">Wings::Ailerons</div><div class="sep" style="top:41px"></div><div class="at" style="left:4px;top:45px">-</div><div class="at" style="left:25px;top:45px">SafetyRating: int</div><div class="at" style="left:4px;top:59px">-</div><div class="at" style="left:25px;top:59px">Type: int</div></div>
<div class="box" style="left:1035px;top:362px;width:142px;height:99px"><div class="bt" style="top:9px">Glider Control System::</div><div class="bt" style="top:23px">Wings::Spoilers</div><div class="sep" style="top:41px"></div><div class="at" style="left:4px;top:45px">-</div><div class="at" style="left:25px;top:45px">SafetyRating: int</div><div class="at" style="left:4px;top:59px">-</div><div class="at" style="left:25px;top:59px">Type: int</div></div>
<div class="box" style="left:858px;top:498px;width:129px;height:79px"><div class="bt" style="top:9px">Glider Control System::</div><div class="bt" style="top:23px">Wings::Flaps</div><div class="sep" style="top:41px"></div><div class="at" style="left:4px;top:45px">-</div><div class="at" style="left:25px;top:45px">Color: int</div><div class="at" style="left:4px;top:59px">-</div><div class="at" style="left:25px;top:59px">Manufacturer: int</div></div>
<div class="box" style="left:1030px;top:481px;width:147px;height:106px"><div class="bt" style="top:9px">Glider Control System::</div><div class="bt" style="top:23px">Wings::Airbrakes</div><div class="sep" style="top:41px"></div><div class="at" style="left:4px;top:45px">-</div><div class="at" style="left:25px;top:45px">Color: string</div><div class="at" style="left:4px;top:59px">-</div><div class="at" style="left:25px;top:59px">Type: int</div></div>
<div class="box" style="left:858px;top:600px;width:322px;height:70px"><div class="bt" style="top:9px">Glider Control System::Wings::SafetyControlSystem</div><div class="sep" style="top:27px"></div><div class="at" style="left:4px;top:31px">-</div><div class="at" style="left:25px;top:31px">ManufacturerID: int</div></div>
<div class="a" style="left:414px;top:410px;width:308px;height:103px;background:#f1f1f1;border:1px solid #1a66c8;box-shadow:inset 0 0 0 1px #fdfaf4,1px 2px 5px rgba(60,70,110,.4)"><div class="a" style="left:0;top:0;width:306px;height:22px;background:#2b579a;border-top:1px solid #3a74c4"></div><div class="t" style="left:7px;top:6px;font-size:11.5px;color:#fff">New version number</div><svg class="a" style="left:286px;top:9px" width="9" height="9" viewBox="0 0 9 9" stroke="#fff" stroke-width="1.500"><path d="M1 1l7 7M8 1L1 8"/></svg><div class="t" style="left:8px;top:38px;font-size:11.5px;color:#444;letter-spacing:0.2px">Enter Value:</div><div class="a" style="left:131px;top:35px;width:150px;height:21px;background:#fff;border:1px solid #7a7a7a"></div><div class="t" style="left:135px;top:36px;font-size:11.3px;color:#444">2.1</div><div class="a" style="left:116px;top:69px;width:75px;height:23px;background:#fdfdfd;border:1px solid #1a6fd0;box-shadow:inset 0 0 0 1px #9cc2ee;text-align:center;font-size:11.5px;line-height:21px;color:#444"><u>O</u>K</div><div class="a" style="left:206px;top:69px;width:75px;height:23px;background:#fdfdfd;border:1px solid #adadad;text-align:center;font-size:11.5px;line-height:21px;color:#444"><u>C</u>ancel</div></div>
</div></div>
<!-- BOTTOM -->
<div class="a" style="left:0;top:947px;width:295px;height:22px;background:#e6e6e6"></div>
<div class="a" style="left:0;top:947px;width:295px;height:1px;background:#d0d0d0"></div>
<div class="a" style="left:144px;top:946px;width:48px;height:23px;background:#fdfdfd;border:1px solid #c2c2c2;border-top:none"></div>
<svg class="a" style="left:4px;top:949px" width="17" height="17" viewBox="0 0 17 17"><rect x=".7" y="5.500" width="12" height="10.500" fill="#eef3fb" stroke="#3a5fb0" stroke-width="1.200"/><path d="M2.500 11l1.500 2 2-3M7.500 11l1.500 2 2-3" fill="none" stroke="#2a4aa0" stroke-width="1.200"/><path d="M4 8.500l9-6.500 2.500 1.500-8.500 7z" fill="#e8c860" stroke="#6a6a40" stroke-width=".8"/><path d="M13 1.500l3 .5v4" fill="none" stroke="#222" stroke-width="1.300"/></svg>
<div class="t" style="left:22px;top:951px;font-size:11.3px">Pr...</div>
<svg class="a" style="left:54px;top:950px" width="13" height="15" viewBox="0 0 13 15"><rect x=".6" y=".6" width="11.800" height="13.800" fill="#e4e8fa" stroke="#6a72c8" stroke-width="1.200"/><path d="M3 4h1M5.500 4h4.500M3 6.500h1M5.500 6.500h4.500M3 9h1M5.500 9h4.500M3 11.500h1M5.500 11.500h3" stroke="#4a52b8" stroke-width="1"/></svg>
<div class="t" style="left:70px;top:951px;font-size:11.3px">Sc...</div>
<div class="t" style="left:102px;top:951px;font-size:11.3px">Toolbox</div>
<svg class="a" style="left:148px;top:949px" width="17" height="17" viewBox="0 0 17 17"><path d="M.7 1.500h4l1 1.500h4.500v5H.7z" fill="#f4cc4a" stroke="#a8841c" stroke-width=".9"/><path d="M4 8v6h3M4 11h3" fill="none" stroke="#222" stroke-width="1.100"/><rect x="6.500" y="6.500" width="8.500" height="9.500" fill="#f4f4fc" stroke="#222" stroke-width="1.200"/><rect x="8.500" y="8.500" width="4.500" height="2" fill="#4a52b8"/><rect x="8.500" y="12" width="4.500" height="2" fill="#4a52b8"/></svg>
<div class="t" style="left:166px;top:951px;font-size:11.3px">Pr...</div>
<svg class="a" style="left:196px;top:948px" width="17" height="18" viewBox="0 0 17 18"><path d="M1 5l6-4 8 4.500v6l-7 4.500-7-5z" fill="#f2cc3a" stroke="#8a6a10" stroke-width=".9"/><path d="M7 1v6l8 4.500M1 5l6 2" fill="none" stroke="#8a6a10" stroke-width=".8"/><path d="M6 2l7 4M4 3.500l7 4" stroke="#fff" stroke-width=".8" stroke-dasharray="1 1"/><path d="M11 9l3 7M14 9l-2 7" stroke="#222" stroke-width="1.200"/></svg>
<div class="t" style="left:214px;top:951px;font-size:11.3px">Re...</div>
<svg class="a" style="left:244px;top:948px" width="17" height="18" viewBox="0 0 17 18"><path d="M5 3.500h6M3.500 6v5" stroke="#222" stroke-width="1.200" fill="none"/><rect x=".7" y=".7" width="5.500" height="5" fill="#dfe6fb" stroke="#2a3cc0" stroke-width="1.200"/><rect x="10" y=".7" width="5.500" height="5" fill="#dfe6fb" stroke="#2a3cc0" stroke-width="1.200"/><circle cx="8" cy="9.500" r="3.800" fill="#eaf2fc" stroke="#333" stroke-width="1.300"/><path d="M10.800 12.300L15.500 17" stroke="#c89a3a" stroke-width="2.400" stroke-linecap="round"/></svg>
<div class="t" style="left:262px;top:951px;font-size:11.3px">Di...</div>
<div class="a" style="left:7px;top:994px;width:94px;height:6px;background:#dbdbdb"></div>
<div class="a" style="left:120px;top:994px;width:123px;height:6px;background:#dbdbdb"></div>
<div class="a" style="left:262px;top:994px;width:100px;height:6px;background:#dbdbdb"></div>
<div class="a" style="left:380px;top:994px;width:50px;height:6px;background:#dbdbdb"></div>
<svg class="a" style="left:7px;top:975px" width="17" height="17" viewBox="0 0 17 17"><path d="M.7 1.500h8l3 3v8.500H.7z" fill="#dfe6fb" stroke="#2a3a9a" stroke-width="1.200"/><path d="M8.500 1.500v3.500h3.200" fill="#fff" stroke="#2a3a9a" stroke-width="1"/><path d="M14 5v6M12 9.500l2 2.500 2-2.500M11.500 13.500h5M11.500 15.500h5" fill="none" stroke="#111" stroke-width="1.200"/></svg>
<div class="t" style="left:25px;top:976px;font-size:11.3px">System Output</div>
<svg class="a" style="left:122px;top:975px" width="14" height="16" viewBox="0 0 14 16"><path d="M.7 .7h8.500l4 4V15.300H.7z" fill="#f2f5fd" stroke="#3a4ab8" stroke-width="1.200"/><path d="M9 .7v4.300h4.200" fill="#fff" stroke="#3a4ab8" stroke-width="1"/><circle cx="5" cy="5.500" r="2" fill="none" stroke="#3a4ab8" stroke-width="1.300"/><path d="M5 7.500v5.500M5 10h2M5 12.500h2" stroke="#3a4ab8" stroke-width="1.200"/></svg>
<div class="t" style="left:138px;top:976px;font-size:11.3px;letter-spacing:0.2px">Resource Allocation</div>
<svg class="a" style="left:263px;top:975px" width="15" height="17" viewBox="0 0 15 17"><path d="M1 5.500L5 1l8.500 6-2.500 8.500z" fill="#cfe0f6" stroke="#6a9ad8" stroke-width="1"/><path d="M2 9l8 5.500M2.500 11.500l7 4.500" stroke="#6a9ad8" stroke-width="1"/><circle cx="5" cy="4.500" r="1" fill="#fff" stroke="#6a9ad8" stroke-width=".7"/></svg>
<div class="t" style="left:280px;top:976px;font-size:11.3px;letter-spacing:0.55px">Tagged Values</div>
<svg class="a" style="left:380px;top:975px" width="17" height="17" viewBox="0 0 17 17"><rect x="1.500" y="2.500" width="11" height="13.500" fill="#fff" stroke="#333" stroke-width="1.200"/><path d="M1.500 4.500h11" stroke="#333" stroke-width="2" stroke-dasharray="1.200 1"/><path d="M4 9h6M4 11.500h6M4 14h4" stroke="#888" stroke-width=".9"/><path d="M7 3.500l4-2.500 5.500 3-3 4.500-4.500-1z" fill="#e01818" stroke="#8a0a0a" stroke-width=".7"/></svg>
<div class="t" style="left:399px;top:976px;font-size:11.3px">Notes</div>
<div id="status" class="a" style="left:0;top:1000px;width:1280px;height:24px;background:#f1f1f1;border-top:1px solid #d8d8d8"></div>
<div class="t" style="left:3px;top:1006px;font-size:11.2px;color:#333">Class Diagram:Glider Control System:</div>
<div class="t" style="left:201px;top:1006px;font-size:11.2px;color:#333;letter-spacing:0.24px">created: 31/03/2016</div>
<div class="t" style="left:311px;top:1006px;font-size:11.2px;color:#333">modified: 2/06/2016 11:24:32 AM</div>
<div class="t" style="left:486px;top:1006px;font-size:11.2px;color:#333">100%</div>
<div class="t" style="left:525px;top:1006px;font-size:11.2px;color:#333">799 x 1134</div>
<div class="a" style="left:966px;top:1013px;width:7px;height:1px;background:#888"></div>
<div class="a" style="left:987px;top:1013px;width:85px;height:1px;background:#999"></div>
<div class="a" style="left:982px;top:1006px;width:6px;height:14px;background:#f4f4f4;border:1px solid #888"></div>
<div class="a" style="left:1081px;top:1013px;width:9px;height:1px;background:#888"></div><div class="a" style="left:1085px;top:1009px;width:1px;height:9px;background:#888"></div>
<div class="t" style="left:1104px;top:1006px;font-size:10.6px;color:#b4b4b4">CAP</div>
<div class="t" style="left:1143px;top:1006px;font-size:10.6px;color:#222">NUM</div>
<div class="t" style="left:1187px;top:1006px;font-size:10.6px;color:#b4b4b4">SCRL</div>
<div class="t" style="left:1233px;top:1006px;font-size:10.6px;color:#b4b4b4">CLOUD</div>
</body>
</html>
